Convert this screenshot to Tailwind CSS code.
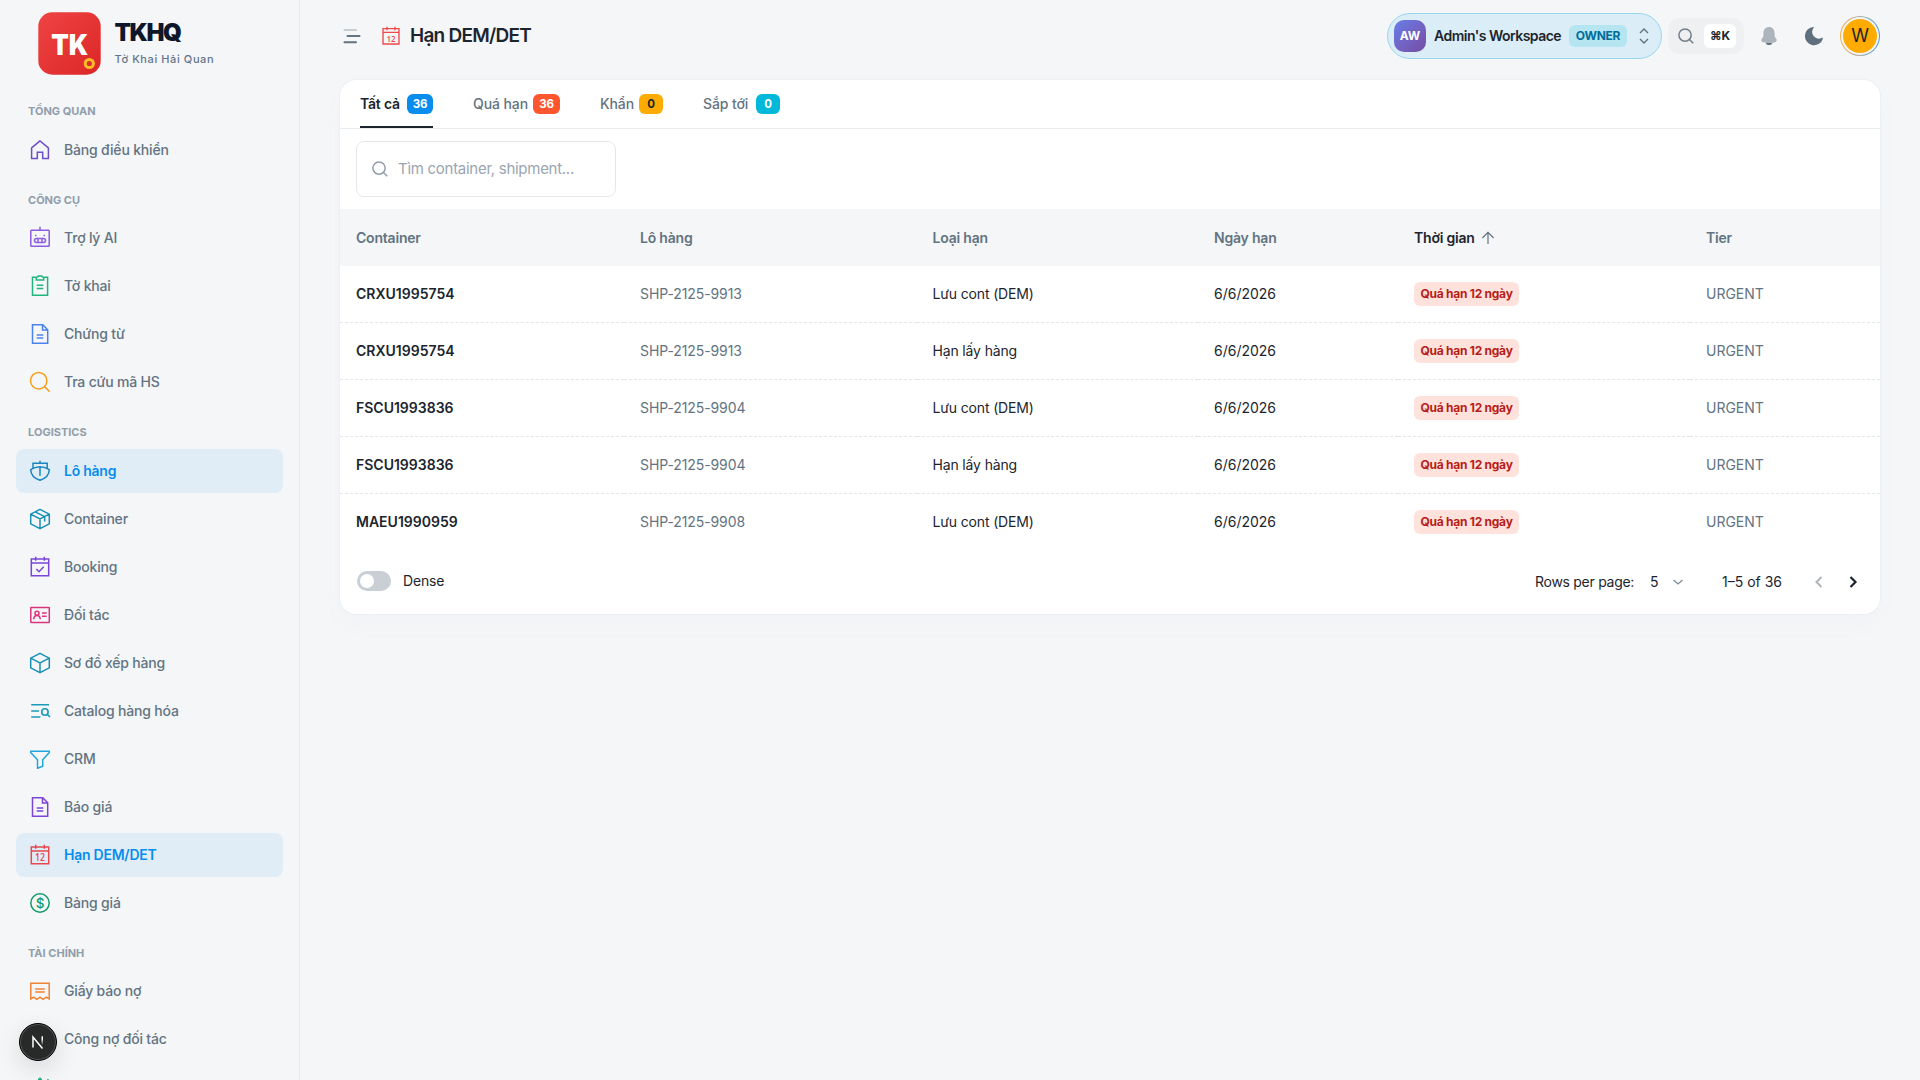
<!DOCTYPE html>
<html lang="vi">
<head>
  <meta charset="UTF-8" />
  <meta name="viewport" content="width=device-width, initial-scale=1.0" />
  <title>Hạn DEM/DET - TKHQ</title>
  <script src="https://cdn.jsdelivr.net/npm/@tailwindcss/browser@4"></script>
</head>
<body class="bg-[#f4f6f8] h-screen overflow-hidden flex font-['Inter',sans-serif] text-sm text-[#1c252e]">

  <!-- Shared icons -->
  <svg class="hidden">
    <symbol id="calendar" viewBox="0 0 24 24">
      <path d="M3.3 4h17.4v16.7H3.3zM3.3 8h17.4M7.7 1.8v4M16.3 1.8v4" />
    </symbol>
    <symbol id="file" viewBox="0 0 24 24">
      <path d="M4.5 2.7h10.3l4.9 5v13.6H4.5zM14.5 2.7v5.2h5.2M8.7 13h6.6M8.7 15.9h6.6" />
    </symbol>
    <symbol id="search" viewBox="0 0 24 24">
      <circle cx="10.7" cy="10.7" r="8.2" /><path d="m16.6 16.6 5.1 5.1" />
    </symbol>
  </svg>

  <!-- Sidebar -->
  <aside class="w-[300px] shrink-0 h-full overflow-hidden border-r border-[#e6eaee] flex flex-col">
    <div class="h-[84px] shrink-0 flex pl-[38px] pt-3">
      <svg class="size-[63px]" viewBox="0 0 63 63">
        <defs>
          <linearGradient id="logo" x1="0" y1="0" x2="1" y2="1">
            <stop offset="0" stop-color="#ef4444" /><stop offset="1" stop-color="#dc2626" />
          </linearGradient>
        </defs>
        <rect x=".3" y=".3" width="62.4" height="62.4" rx="14" fill="url(#logo)" />
        <text x="13.3" y="42.8" font-family="Inter" font-size="28.5" font-weight="900" textLength="37" lengthAdjust="spacingAndGlyphs" fill="#fff">TK</text>
        <circle cx="51.3" cy="51.5" r="4.1" fill="none" stroke="#fbbf24" stroke-width="3" />
      </svg>
      <div class="pl-[13.5px] pt-[5px]">
        <div class="text-2xl leading-[32px] font-black tracking-[-1.4px] text-[#0f172a]">TKHQ</div>
        <div class="text-[11px] leading-4 font-medium tracking-[0.6px] text-[#64748b] mt-[2px]">Tờ Khai Hải Quan</div>
      </div>
    </div>

    <nav class="px-4 font-medium tracking-[-0.18px] text-[#637381] whitespace-nowrap">
      <h2 class="h-11 pt-[19px] pl-3 text-[11px] leading-4 font-bold tracking-normal text-[#919eab]">TỔNG QUAN</h2>
      <a class="h-11 pl-3 flex items-center gap-3 rounded-lg">
        <svg class="size-6 fill-none stroke-[1.5] stroke-[#6d4fc4]" viewBox="0 0 24 24"><path d="m12 2.9-8.4 7v10.5h5.7v-6.2h5.4v6.2h5.7V9.9z" /></svg>
        Bảng điều khiển
      </a>

      <h2 class="h-11 pt-5 pl-3 text-[11px] leading-4 font-bold tracking-normal text-[#919eab]">CÔNG CỤ</h2>
      <div class="flex flex-col gap-1">
        <a class="h-11 pl-3 flex items-center gap-3 rounded-lg">
          <svg class="size-6 fill-none stroke-[1.5] stroke-[#8b5ee0]" viewBox="0 0 24 24"><rect x="2.8" y="4.3" width="18.4" height="16" rx=".8" /><path d="M12 .7v3.6M7 9.5h1.5M15.5 9.5H17M10 12.6v4M14 12.6v4" /><rect x="6.5" y="12.6" width="11" height="4" rx="2" /></svg>
          Trợ lý AI
        </a>
        <a class="h-11 pl-3 flex items-center gap-3 rounded-lg">
          <svg class="size-6 fill-none stroke-[1.5] stroke-[#1fb57c]" viewBox="0 0 24 24"><path d="M8 3.2H4.5v18.1h15.1V3.2H16M8.3 3.2c1.5 0 1.8-.2 2.1-1.2h3.2c.3 1 .6 1.2 2.1 1.2v2.900H8.3zM8.7 11.2h6.6M8.7 14.5h6.6" /></svg>
          Tờ khai
        </a>
        <a class="h-11 pl-3 flex items-center gap-3 rounded-lg">
          <svg class="size-6 fill-none stroke-[1.5] stroke-[#4b83ee]"><use href="#file" /></svg>
          Chứng từ
        </a>
        <a class="h-11 pl-3 flex items-center gap-3 rounded-lg">
          <svg class="size-6 fill-none stroke-[1.5] stroke-[#f59e1b]"><use href="#search" /></svg>
          Tra cứu mã HS
        </a>
      </div>

      <h2 class="h-[45px] pt-5 pl-3 text-[11px] leading-4 font-bold tracking-normal text-[#919eab]">LOGISTICS</h2>
      <div class="flex flex-col gap-1">
        <a class="h-11 pl-3 flex items-center gap-3 rounded-lg bg-[#e0edf7] text-[#078dee] font-semibold tracking-[-0.25px]">
          <svg class="size-6 fill-none stroke-[1.5] stroke-[#1985bd]" viewBox="0 0 24 24"><path d="M12 1.7v2.6M5 9.3v-5h14.2v5M12 7.9v8.8M12 7.7c-3.9.2-6.9 1.300-9.300 2.900.1 5.600 3.500 8.900 9.300 10.700 5.800-1.800 9.200-5.100 9.300-10.700-2.400-1.600-5.400-2.700-9.300-2.900z" /></svg>
          Lô hàng
        </a>
        <a class="h-11 pl-3 flex items-center gap-3 rounded-lg">
          <svg class="size-6 fill-none stroke-[1.5] stroke-[#1a90b3]" viewBox="0 0 24 24"><path d="m12 2.3 9.3 4.9v9.700L12 21.7l-9.3-4.8V7.2zM2.7 7.2 12 12l9.3-4.8M12 12v9.7M7.2 4.8l9.5 4.900v4.800" /></svg>
          Container
        </a>
        <a class="h-11 pl-3 flex items-center gap-3 rounded-lg">
          <svg class="size-6 fill-none stroke-[1.5] stroke-[#7c45d8]" viewBox="0 0 24 24"><use href="#calendar" /><path d="m8.3 14 2.7 2.7 4.7-5" /></svg>
          Booking
        </a>
        <a class="h-11 pl-3 flex items-center gap-3 rounded-lg">
          <svg class="size-6 fill-none stroke-[1.5] stroke-[#d9347c]" viewBox="0 0 24 24"><rect x="2.8" y="4.5" width="18.5" height="15" rx=".4" /><circle cx="9" cy="10.2" r="2" /><path d="M5.7 16.2c.2-2.300 1.300-3.600 3.300-3.600s3.100 1.300 3.300 3.600M14 10h4.7M14 13.2h4.7" /></svg>
          Đối tác
        </a>
        <a class="h-11 pl-3 flex items-center gap-3 rounded-lg">
          <svg class="size-6 fill-none stroke-[1.5] stroke-[#1a90b3]" viewBox="0 0 24 24"><path d="m12 2.3 9.3 4.9v9.7L12 21.7l-9.3-4.8V7.2zM2.7 7.2 12 12l9.3-4.8M12 12v9.7" /></svg>
          Sơ đồ xếp hàng
        </a>
        <a class="h-11 pl-3 flex items-center gap-3 rounded-lg">
          <svg class="size-6 fill-none stroke-[1.6] stroke-[#1a9bb8]" viewBox="0 0 24 24"><path d="M3.2 5.7H21M3.2 12H11M3.2 18h9.2M19 15.2l3 2.800" /><circle cx="16.9" cy="13" r="3.2" /></svg>
          Catalog hàng hóa
        </a>
        <a class="h-11 pl-3 flex items-center gap-3 rounded-lg">
          <svg class="size-6 fill-none stroke-[1.5] stroke-[#22a5dc] [stroke-linejoin:round]" viewBox="0 0 24 24"><path d="M2.7 4.300h18.6v1.200l-6.6 7.200v6.600l-5.200 1.900v-8.500L2.7 5.500z" /></svg>
          CRM
        </a>
        <a class="h-11 pl-3 flex items-center gap-3 rounded-lg">
          <svg class="size-6 fill-none stroke-[1.5] stroke-[#7c45d8]"><use href="#file" /></svg>
          Báo giá
        </a>
        <a class="h-11 pl-3 flex items-center gap-3 rounded-lg bg-[#e0edf7] text-[#078dee] font-semibold tracking-[-0.25px]">
          <svg class="size-6 fill-none stroke-[1.5] stroke-[#e5484d]" viewBox="0 0 24 24"><use href="#calendar" /><text x="7" y="18.2" font-size="10.5" textLength="10" lengthAdjust="spacingAndGlyphs" class="fill-[#e5484d] stroke-none font-semibold font-['Open_Sans'] tracking-normal">12</text></svg>
          Hạn DEM/DET
        </a>
        <a class="h-11 pl-3 flex items-center gap-3 rounded-lg">
          <svg class="size-6 fill-none stroke-[1.5] stroke-[#119a68]" viewBox="0 0 24 24"><circle cx="12" cy="12" r="9.2" /><text x="12" y="16.8" text-anchor="middle" font-size="13.5" class="fill-[#119a68] stroke-none font-medium tracking-normal">$</text></svg>
          Bảng giá
        </a>
      </div>

      <h2 class="h-11 pt-5 pl-3 text-[11px] leading-4 font-bold tracking-normal text-[#919eab]">TÀI CHÍNH</h2>
      <div class="flex flex-col gap-1">
        <a class="h-11 pl-3 flex items-center gap-3 rounded-lg">
          <svg class="size-6 fill-none stroke-[1.5] stroke-[#ef8433]" viewBox="0 0 24 24"><path d="M2.8 20V4.2h18.400V20l-3-1.800-3.100 2.200-3.100-2.200-3.100 2.200-3.100-2.200zM7.200 10h9.600M7.200 13h9.600" /></svg>
          Giấy báo nợ
        </a>
        <a class="h-11 pl-12 flex items-center rounded-lg">Công nợ đối tác</a>
        <a class="h-11 pl-3 flex items-center gap-3 rounded-lg">
          <svg class="size-6 fill-none stroke-[1.5] stroke-[#1fb57c]" viewBox="0 0 24 24"><path d="M12 2.500v4M10 4.300h4M20.500 4.300l-2 2M12 8v10" /></svg>
        </a>
      </div>
    </nav>
  </aside>

  <!-- Next.js dev badge -->
  <div class="fixed left-[19px] bottom-[19px] size-[38px] rounded-full bg-[#272a29] border border-black shadow-[inset_0_0_0_1px_#555,0_8px_24px_rgba(0,0,0,0.12)] flex items-center justify-center">
    <svg class="size-4 fill-none stroke-white stroke-[1.5]" viewBox="0 0 16 16">
      <defs>
        <linearGradient id="fade" x1="0" y1="0" x2="0" y2="1"><stop offset=".3" stop-color="#fff" /><stop offset="1" stop-color="#fff" stop-opacity="0" /></linearGradient>
      </defs>
      <path d="M3 13.5V3l9.5 11.5" /><rect x="11.5" y="2.3" width="1.5" height="9" fill="url(#fade)" stroke="none" />
    </svg>
  </div>

  <div class="flex-1 min-w-0 px-10">
    <!-- Header -->
    <header class="h-20 flex items-start justify-between whitespace-nowrap">
      <div class="h-[72px] flex items-center">
        <svg class="size-6 fill-none stroke-2 [stroke-linecap:round]" viewBox="0 0 24 24">
          <path class="stroke-[#c5ccd2]" d="M4.5 6H16" /><path class="stroke-[#637381]" d="M7.5 12h12" /><path class="stroke-[#637381]" d="M4.5 18.300H16" />
        </svg>
        <svg class="size-[22px] ml-4 fill-none stroke-[1.5] stroke-[#f04a4a]" viewBox="0 0 24 24"><use href="#calendar" /><text x="7" y="18.2" font-size="10.5" textLength="10" lengthAdjust="spacingAndGlyphs" class="fill-[#f04a4a] stroke-none font-semibold font-['Open_Sans']">12</text></svg>
        <h1 class="ml-2 text-[19px] font-semibold tracking-[-0.75px]">Hạn DEM/DET</h1>
      </div>

      <div class="h-[72px] flex items-center">
        <div class="w-[275px] h-[46px] rounded-full border border-[#9ad5ee] bg-[#dbedf6] flex items-center pl-[6px]">
          <span class="size-8 rounded-[10px] bg-linear-135 from-[#667eea] to-[#764ba2] text-white text-xs font-bold flex items-center justify-center">AW</span>
          <span class="ml-2 w-[135px] font-semibold tracking-[-0.52px]">Admin's Workspace</span>
          <span class="w-[58px] h-[22px] rounded-md bg-[#b5e5f0] text-[#006c9c] text-xs font-bold tracking-[-0.25px] flex items-center justify-center">OWNER</span>
          <svg class="size-4 ml-[9px] fill-none stroke-[#637381] stroke-[1.4]" viewBox="0 0 16 16"><path d="m4 5 4-4 4 4M4 11l4 4 4-4" /></svg>
        </div>
        <div class="ml-[6px] w-[76px] h-9 rounded-xl bg-[#eef0f2] flex items-center pl-[9px]">
          <svg class="size-[18px] fill-none stroke-2 stroke-[#737f8a]"><use href="#search" /></svg>
          <span class="ml-[9px] w-8 h-6 rounded-md bg-white text-xs font-bold flex items-center justify-center">⌘K</span>
        </div>
        <svg class="size-6 ml-[13px]" viewBox="0 0 24 24"><path d="M8.500 18.500h7c-.6 1.700-1.800 2.600-3.500 2.600s-2.900-.9-3.500-2.600z" fill="#637381" /><path d="M12 3c-3.300 0-5.400 2.300-5.500 5.600l-.2 3.600c-.1 1.300-2 2.200-2 3.700 0 2.300 2.600 3 7.700 3s7.700-.7 7.700-3c0-1.500-1.900-2.400-2-3.700l-.2-3.600C17.400 5.300 15.300 3 12 3z" fill="#adb4bb" /></svg>
        <svg class="size-[22px] ml-[22px]" viewBox="0 0 24 24"><path d="M11.500 2.100a10 10 0 1 0 10.200 12.600c.2-.7-.5-1.100-1.100-.7A7.200 7.200 0 0 1 11.500 3.300c.4-.6.5-1.200 0-1.200z" fill="#5f6f7e" /></svg>
        <div class="ml-[15px] size-10 rounded-full p-px bg-linear-90 from-[#f5b045] to-[#4a9bdc]">
          <div class="size-full rounded-full bg-[#f4f6f8] p-[2px]">
            <div class="size-full rounded-full bg-[#ffab00] flex items-center justify-center text-lg">W</div>
          </div>
        </div>
      </div>
    </header>

    <!-- Deadline card -->
    <main class="h-[534px] bg-white rounded-2xl overflow-hidden shadow-[0_0_2px_rgba(145,158,171,0.2),0_12px_24px_-4px_rgba(145,158,171,0.04)]">
      <div class="h-[49px] border-b border-[#e9ecee] px-5 flex gap-10 font-medium tracking-[-0.1px] text-[#637381] whitespace-nowrap">
        <div class="w-[73px] h-12 border-b-2 border-[#1c252e] pt-[2px] flex items-center justify-between text-[#1c252e] font-semibold tracking-[-0.2px]">Tất cả <span class="w-[26px] h-5 rounded-md bg-[#078dee] text-white text-[11.5px] font-bold flex items-center justify-center">36</span></div>
        <div class="w-[87px] h-12 flex items-center justify-between">Quá hạn <span class="w-[27px] h-5 rounded-md bg-[#ff5630] text-white text-[11.5px] font-bold flex items-center justify-center">36</span></div>
        <div class="w-[63px] h-12 flex items-center justify-between">Khẩn <span class="w-6 h-5 rounded-md bg-[#ffab00] text-[#1c252e] text-[11.5px] font-bold flex items-center justify-center">0</span></div>
        <div class="w-[77px] h-12 flex items-center justify-between">Sắp tới <span class="w-6 h-5 rounded-md bg-[#00b8d9] text-white text-[11.5px] font-bold flex items-center justify-center">0</span></div>
      </div>

      <div class="h-20 pt-3 pl-4">
        <div class="w-[260px] h-14 rounded-lg border border-[#e5e8eb] flex items-center pl-[14px] gap-[9px] text-[15px] tracking-[-0.28px] text-[#9aa5b1]">
          <svg class="size-[18px] fill-none stroke-2 stroke-[#919eab]"><use href="#search" /></svg>
          Tìm container, shipment...
        </div>
      </div>

      <table class="w-full table-fixed text-left">
        <colgroup>
          <col class="w-[284px]" /><col class="w-[292.5px]" /><col class="w-[281.5px]" /><col class="w-[200px]" /><col class="w-[292px]" /><col />
        </colgroup>
        <thead>
          <tr class="h-[57px] bg-[#f4f6f8] text-[#637381] tracking-[-0.2px]">
            <th class="px-4 font-semibold">Container</th>
            <th class="px-4 font-semibold">Lô hàng</th>
            <th class="px-4 font-semibold">Loại hạn</th>
            <th class="px-4 font-semibold">Ngày hạn</th>
            <th class="px-4 font-semibold text-[#1c252e]">
              <span class="flex items-center gap-1">Thời gian
                <svg class="size-[18px] fill-none stroke-[#637381] stroke-[1.6]" viewBox="0 0 24 24"><path d="M12 20V4.5M4.5 12 12 4.5l7.5 7.5" /></svg>
              </span>
            </th>
            <th class="px-4 font-semibold">Tier</th>
          </tr>
        </thead>
        <tbody id="rows"></tbody>
      </table>

      <div class="h-[62px] pl-[17px] flex items-center whitespace-nowrap">
        <span class="w-[34px] h-5 rounded-full bg-[#c9cfd4] p-[3px]"><span class="block size-[14px] rounded-full bg-white"></span></span>
        <span class="ml-3 tracking-[-0.15px]">Dense</span>
        <div class="ml-auto pt-[2px] pr-[19px] flex items-center">
          <span class="w-[115px] tracking-[-0.28px]">Rows per page:</span>
          <span class="w-5">5</span>
          <svg class="size-4 fill-none stroke-[#7d8994] stroke-[1.3]" viewBox="0 0 16 16"><path d="m3.500 6 4.500 4 4.500-4" /></svg>
          <span class="ml-9 w-[89px]">1–5 of 36</span>
          <svg class="size-4 fill-none stroke-[#b0b5b9] stroke-2" viewBox="0 0 16 16"><path d="m10.500 3-5 5 5 5" /></svg>
          <svg class="size-4 ml-[18px] fill-none stroke-[#1c252e] stroke-[2.2]" viewBox="0 0 16 16"><path d="m5.500 3 5 5-5 5" /></svg>
        </div>
      </div>
    </main>
  </div>

  <script>
    const rows = [
      ['CRXU1995754', 'SHP-2125-9913', 'Lưu cont (DEM)'],
      ['CRXU1995754', 'SHP-2125-9913', 'Hạn lấy hàng'],
      ['FSCU1993836', 'SHP-2125-9904', 'Lưu cont (DEM)'],
      ['FSCU1993836', 'SHP-2125-9904', 'Hạn lấy hàng'],
      ['MAEU1990959', 'SHP-2125-9908', 'Lưu cont (DEM)'],
    ];

    document.getElementById('rows').innerHTML = rows.map(([container, shipment, type]) => `
      <tr class="h-[57px] first:h-14 border-b border-dashed border-[#e3e7ea] last:border-b-0">
        <td class="px-4 font-semibold">${container}</td>
        <td class="px-4 tracking-[-0.1px] text-[#637381]">${shipment}</td>
        <td class="px-4 tracking-[-0.15px]">${type}</td>
        <td class="px-4">6/6/2026</td>
        <td class="px-4"><span class="w-[105px] h-6 rounded-md bg-[#ffe2dc] text-[#b71d18] text-xs font-bold tracking-[-0.25px] whitespace-nowrap flex items-center justify-center">Quá hạn 12 ngày</span></td>
        <td class="px-4 text-[#637381]">URGENT</td>
      </tr>`).join('');
  </script>

</body>
</html>
